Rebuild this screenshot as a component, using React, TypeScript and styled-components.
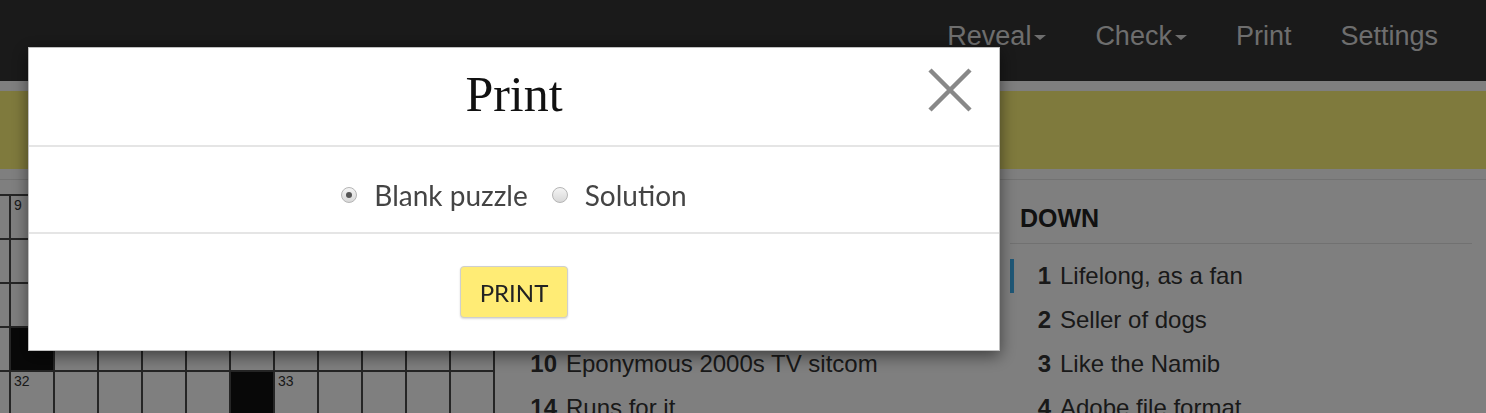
import styled, { createGlobalStyle } from 'styled-components';

const GlobalStyle = createGlobalStyle`
  html, body {
    margin: 0;
    height: 413px;
    overflow: hidden;
    background: #fff;
    font-family: "Liberation Sans", Arial, sans-serif;
  }
`;

const Page = styled.div`
  width: 1486px;
  height: 413px;
  overflow: hidden;
`;

const NavBar = styled.nav`
  height: 81px;
  box-sizing: border-box;
  padding: 0 48px 10px 0;
  background: #343434;
  display: flex;
  justify-content: flex-end;
  align-items: center;
  gap: 49px;
`;

const NavItem = styled.span<{ $dropdown?: boolean }>`
  color: #dcdcdc;
  font-size: 27px;
  line-height: 30px;
  display: flex;
  align-items: center;

  &::after {
    content: '';
    display: ${p => (p.$dropdown ? 'block' : 'none')};
    margin-left: 3px;
    margin-top: 3px;
    border-left: 6px solid transparent;
    border-right: 6px solid transparent;
    border-top: 5px solid #dcdcdc;
  }
`;

const BannerStrip = styled.div`
  padding: 10px 0;
  border-bottom: 1px solid #e4e4e4;
`;

const Banner = styled.div`
  height: 78px;
  background: #fef47a;
`;

const Content = styled.main`
  display: flex;
  align-items: flex-start;
  padding-top: 14px;
`;

const Board = styled.div`
  flex-shrink: 0;
  margin-left: -167px;
  display: grid;
  grid-template-columns: repeat(15, 42px);
  grid-auto-rows: 42px;
  gap: 2px;
  padding: 2px;
  background: #4a4a4a;
`;

const Cell = styled.div<{ $black?: boolean }>`
  background: ${p => (p.$black ? '#111' : '#fff')};
  color: #333;
  font-size: 14px;
  line-height: 15px;
  padding: 2px 3px;
`;

const ClueArea = styled.section`
  display: flex;
  gap: 32px;
  margin-left: 21px;
`;

const ClueColumn = styled.div`
  width: 462px;
`;

const ColumnHeading = styled.h3`
  margin: 9px 0 0;
  padding: 0 0 10px 10px;
  font-size: 25px;
  line-height: 30px;
  font-weight: bold;
  color: #222;
  border-bottom: 1px solid #e2e2e2;
`;

const ClueList = styled.ol`
  list-style: none;
  margin: 15px 0 0;
  padding: 0;
`;

const ClueItem = styled.li<{ $active?: boolean }>`
  display: flex;
  height: 34px;
  margin-bottom: 10px;
  border-left: 4px solid ${p => (p.$active ? '#3fb0ee' : 'transparent')};
  padding-left: 7px;
  font-size: 24px;
  line-height: 34px;
  color: #333;
  white-space: nowrap;
`;

const ClueNumber = styled.span`
  width: 30px;
  text-align: right;
  font-weight: bold;
  margin-right: 9px;
  flex-shrink: 0;
`;

const Overlay = styled.div`
  position: fixed;
  inset: 0;
  background: rgba(0, 0, 0, 0.5);
`;

const Modal = styled.div`
  width: 970px;
  margin: 47px 0 0 28px;
  background: #fff;
  border: 1px solid rgba(0, 0, 0, 0.25);
  box-shadow: 0 5px 15px rgba(0, 0, 0, 0.5);
  font-family: Lato, "Liberation Sans", sans-serif;
`;

const ModalHeader = styled.header`
  height: 97px;
  display: grid;
  grid-template-columns: 1fr auto 1fr;
  align-items: center;
  border-bottom: 2px solid #e5e5e5;
`;

const Title = styled.h2`
  margin: 0;
  padding-bottom: 6px;
  font-family: "Liberation Serif", "Times New Roman", serif;
  font-weight: normal;
  font-size: 50px;
  color: #111;
`;

const CloseButton = styled.button`
  justify-self: end;
  margin-right: 26px;
  margin-bottom: 14px;
  padding: 0;
  border: 0;
  background: none;
  width: 46px;
  height: 46px;
  cursor: pointer;
`;

const ModalBody = styled.div`
  display: flex;
  justify-content: center;
  align-items: center;
  padding: 29px 0 18px;
  border-bottom: 2px solid #e5e5e5;
`;

const RadioLabel = styled.label`
  display: flex;
  align-items: center;
  font-size: 28px;
  line-height: 38px;
  color: #444;

  & + & {
    margin-left: 24px;
  }
`;

const Radio = styled.input.attrs({ type: 'radio' })`
  appearance: none;
  width: 16px;
  height: 16px;
  margin: 0 17px 0 0;
  border-radius: 50%;
  border: 1px solid #b5b5b5;
  background: linear-gradient(#f4f4f4, #d8d8d8);
  display: grid;
  place-items: center;

  &:checked::after {
    content: '';
    width: 6px;
    height: 6px;
    border-radius: 50%;
    background: #555;
  }
`;

const ModalFooter = styled.footer`
  height: 116px;
  display: flex;
  justify-content: center;
  align-items: center;
`;

const PrintButton = styled.button`
  width: 108px;
  height: 52px;
  background: #ffec75;
  border: 1px solid #cfcfcf;
  border-radius: 4px;
  box-shadow: 0 1px 2px rgba(0, 0, 0, 0.15);
  font-family: Lato, "Liberation Sans", sans-serif;
  font-size: 24px;
  color: #222;
  cursor: pointer;
`;

const black = new Set(['3-4', '4-9']);
const numbers: Record<string, number> = { '0-4': 9, '4-4': 32, '4-10': 33 };

const across = [
  { n: 1, text: 'Brief moment' },
  { n: 5, text: 'Snack in a shell' },
  { n: 10, text: 'Eponymous 2000s TV sitcom' },
  { n: 14, text: 'Runs for it' },
];

const down = [
  { n: 1, text: 'Lifelong, as a fan', active: true },
  { n: 2, text: 'Seller of dogs' },
  { n: 3, text: 'Like the Namib' },
  { n: 4, text: 'Adobe file format' },
];

export default function App() {
  const cells = [];
  for (let r = 0; r < 6; r++) {
    for (let c = 0; c < 15; c++) {
      const key = `${r}-${c}`;
      cells.push(
        <Cell key={key} $black={black.has(key)}>
          {numbers[key]}
        </Cell>
      );
    }
  }

  return (
    <Page>
      <GlobalStyle />
      <NavBar>
        <NavItem $dropdown>Reveal</NavItem>
        <NavItem $dropdown>Check</NavItem>
        <NavItem>Print</NavItem>
        <NavItem>Settings</NavItem>
      </NavBar>
      <BannerStrip>
        <Banner />
      </BannerStrip>
      <Content>
        <Board>{cells}</Board>
        <ClueArea>
          <ClueColumn>
            <ColumnHeading>ACROSS</ColumnHeading>
            <ClueList>
              {across.map(c => (
                <ClueItem key={c.n}>
                  <ClueNumber>{c.n}</ClueNumber>
                  {c.text}
                </ClueItem>
              ))}
            </ClueList>
          </ClueColumn>
          <ClueColumn>
            <ColumnHeading>DOWN</ColumnHeading>
            <ClueList>
              {down.map(c => (
                <ClueItem key={c.n} $active={c.active}>
                  <ClueNumber>{c.n}</ClueNumber>
                  {c.text}
                </ClueItem>
              ))}
            </ClueList>
          </ClueColumn>
        </ClueArea>
      </Content>

      <Overlay>
        <Modal role="dialog">
          <ModalHeader>
            <span />
            <Title>Print</Title>
            <CloseButton aria-label="Close">
              <svg width="46" height="46" viewBox="0 0 46 46">
                <path d="M3 3 L43 43 M43 3 L3 43" stroke="#888" strokeWidth="4.5" />
              </svg>
            </CloseButton>
          </ModalHeader>
          <ModalBody>
            <RadioLabel>
              <Radio name="print" defaultChecked />
              Blank puzzle
            </RadioLabel>
            <RadioLabel>
              <Radio name="print" />
              Solution
            </RadioLabel>
          </ModalBody>
          <ModalFooter>
            <PrintButton>PRINT</PrintButton>
          </ModalFooter>
        </Modal>
      </Overlay>
    </Page>
  );
}
